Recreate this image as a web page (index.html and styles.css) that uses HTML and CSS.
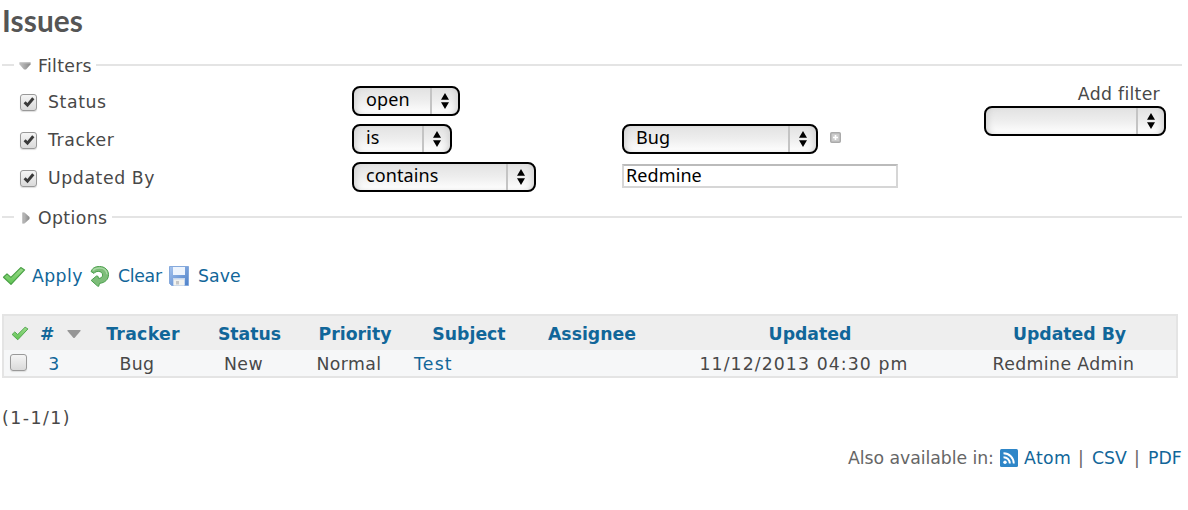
FILE: index.html
```html
<!DOCTYPE html>
<html lang="en">
<head>
<meta charset="utf-8">
<title>Issues</title>
<link rel="stylesheet" href="styles.css">
</head>
<body>
<svg width="0" height="0" class="defs">
  <defs>
    <linearGradient id="green" x1="0" y1="0" x2="0" y2="1"><stop offset="0" stop-color="#9bdb8b"/><stop offset="1" stop-color="#5fc452"/></linearGradient>
    <linearGradient id="grey" x1="0" y1="0" x2="1" y2="0"><stop offset="0" stop-color="#c4c4c4"/><stop offset="1" stop-color="#888"/></linearGradient>
    <linearGradient id="blue" x1="0" y1="0" x2="1" y2="1"><stop offset="0" stop-color="#a5c3ee"/><stop offset="1" stop-color="#4b7fc8"/></linearGradient>
    <symbol id="tick" viewBox="0 0 24 20"><path d="M1.500 11.300 5 7.900l3.900 3.500L18.800 1.600l3.800 2.300L9 18.400z" fill="url(#green)" stroke="#4aa046" stroke-width="1.200" stroke-linejoin="round"/></symbol>
    <symbol id="arrows" viewBox="0 0 8 16"><path d="M4 0 8 6.7H0zM0 9.3h8L4 16z" fill="#000"/></symbol>
    <symbol id="check" viewBox="0 0 12 12"><path d="M1.6 6.2 4.5 9.2 10.3 2.2" fill="none" stroke="#3a3a3a" stroke-width="2.9"/></symbol>
  </defs>
</svg>
<main class="content">
  <h2 class="title">Issues</h2>

  <section class="filters">
    <div class="legend">
      <span class="stub"></span>
      <svg class="toggle" width="12" height="12" viewBox="0 0 12 12"><path d="M.5 2.5h11v2L7 9.500H5L.5 4.5z" fill="url(#grey)"/><path d="M.5 2.5h11v1H.5z" fill="#bbb"/></svg>
      <span class="legend-text filters-text">Filters</span>
      <span class="rule"></span>
    </div>
    <div class="filter-body">
      <div class="rows">
        <div class="row">
          <span class="box"><svg width="12" height="12"><use href="#check"/></svg></span>
          <span class="label status">Status</span>
          <span class="select w-open"><span class="value">open</span><span class="knob"><svg width="8" height="16"><use href="#arrows"/></svg></span></span>
        </div>
        <div class="row">
          <span class="box"><svg width="12" height="12"><use href="#check"/></svg></span>
          <span class="label tracker">Tracker</span>
          <span class="select w-is"><span class="value">is</span><span class="knob"><svg width="8" height="16"><use href="#arrows"/></svg></span></span>
          <span class="values">
            <span class="select w-bug"><span class="value">Bug</span><span class="knob"><svg width="8" height="16"><use href="#arrows"/></svg></span></span>
            <svg class="plus" width="11" height="11" viewBox="0 0 11 11"><rect x=".75" y=".75" width="9.5" height="9.5" rx="1" fill="#ccc" stroke="#aaa" stroke-width="1.5"/><path d="M5.5 3v5M3 5.5h5" stroke="#fff" stroke-width="1.6"/></svg>
          </span>
        </div>
        <div class="row">
          <span class="box"><svg width="12" height="12"><use href="#check"/></svg></span>
          <span class="label updated">Updated By</span>
          <span class="select w-contains"><span class="value">contains</span><span class="knob"><svg width="8" height="16"><use href="#arrows"/></svg></span></span>
          <span class="input">Redmine</span>
        </div>
      </div>
      <div class="add-filter">
        <span class="add-label">Add filter</span>
        <span class="select w-add"><span class="value"></span><span class="knob"><svg width="8" height="16"><use href="#arrows"/></svg></span></span>
      </div>
    </div>
  </section>

  <div class="legend options">
    <span class="stub"></span>
    <svg class="toggle" width="12" height="12" viewBox="0 0 12 12"><path d="M3.500 .5h2L10.5 5v2L5.500 11.5h-2z" fill="url(#grey)"/><path d="M3.500 .5h1v11h-1z" fill="#aaa"/></svg>
    <span class="legend-text options-text">Options</span>
    <span class="rule"></span>
  </div>

  <p class="buttons">
    <a class="action apply"><svg width="24" height="20"><use href="#tick"/></svg>Apply</a>
    <a class="action clear"><svg width="20" height="22" viewBox="0 0 20 22"><path d="M1 6.500C2.500 2.800 5.500 1.500 9.500 1.500c5.200 0 9 3.400 9 8.200 0 4.600-3.300 8-9 8.700L8.700 21.300 7.500 21 1.200 15.400 6.500 11l1.500.3.600 2.200c2.300-.2 4-1.500 4-3.400 0-2.300-1.800-3.700-4.300-3.700-2 0-3.200.700-4.300 2z" fill="#7dbd79" stroke="#4a9f4c" stroke-width="1" stroke-linejoin="round"/><path d="M3 5.500C4.500 3.700 6.500 2.900 9.500 2.900c4.200 0 7.300 2.500 7.500 6.300" fill="none" stroke="#a9d8a4" stroke-width="1.500"/></svg>Clear</a>
    <a class="action save"><svg width="20" height="20" viewBox="0 0 20 20"><path d="M.5.5h19v19H2.500l-2-2z" fill="url(#blue)" stroke="#85a9dc"/><path d="M4 1h12v8H4z" fill="#edf4fd"/><path d="M4 12h12v7.500H4z" fill="#c8d8ee"/><path d="M5 13.500h10v6H5z" fill="#f3f3ef"/><path d="M7 15h3v3.500H7z" fill="#c6c6c6"/></svg>Save</a>
  </p>

  <table class="list">
    <colgroup><col class="c-check"><col class="c-id"><col class="c-tracker"><col class="c-status"><col class="c-priority"><col class="c-subject"><col class="c-assignee"><col class="c-updated"><col class="c-by"></colgroup>
    <thead>
      <tr>
        <th><svg class="th-tick" width="18" height="15"><use href="#tick"/></svg></th>
        <th><span class="sort">#<svg width="14" height="8" viewBox="0 0 14 8"><path d="M.5 0h13v1L7.500 8h-1L.5 1z" fill="#969696"/></svg></span></th>
        <th class="th-tracker">Tracker</th><th>Status</th><th>Priority</th><th>Subject</th><th>Assignee</th><th>Updated</th><th>Updated By</th>
      </tr>
    </thead>
    <tbody>
      <tr>
        <td class="td-check"><span class="box"></span></td>
        <td class="td-id"><a>3</a></td><td>Bug</td><td>New</td><td>Normal</td><td class="td-subject"><a>Test</a></td><td></td><td class="td-date">11/12/2013 04:30 pm</td><td>Redmine Admin</td>
      </tr>
    </tbody>
  </table>

  <p class="pagination">(1-1/1)</p>

  <p class="formats">
    <span class="also">Also available in:</span>
    <svg class="feed" width="18" height="18" viewBox="0 0 18 18"><rect width="18" height="18" rx="1.500" fill="#2e86c8"/><circle cx="5" cy="13.200" r="1.700" fill="#fff"/><path d="M3.500 8.200a6.300 6.300 0 0 1 6.300 6.300M3.500 4.200a10.300 10.300 0 0 1 10.300 10.300" fill="none" stroke="#fff" stroke-width="1.900"/></svg>
    <a class="atom">Atom</a><span class="sep">|</span><a class="csv">CSV</a><span class="sep">|</span><a class="pdf">PDF</a>
  </p>
</main>
</body>
</html>
```

FILE: styles.css
```css
* { box-sizing: border-box; }
body {
  margin: 0;
  background: #fff;
  color: #484848;
  font: 17.3px/24px "DejaVu Sans", Verdana, sans-serif;
  letter-spacing: .4px;
}
svg { display: block; flex: none; }
.defs { position: absolute; }
a { color: #169; }
p { margin: 0; }
.content { width: 1182px; padding-left: 2px; }
.title {
  height: 53px;
  margin: 0;
  padding-top: 1px;
  color: #555;
  font: bold 29.8px/40px Lato, "Trebuchet MS", sans-serif;
  letter-spacing: .1px;
}

.legend { display: flex; align-items: center; height: 24px; }
.stub { width: 12px; height: 2px; background: #e4e4e4; }
.rule { flex: 1; height: 2px; background: #e4e4e4; }
.toggle { margin: 2px 6px 0 5px; }
.legend-text { margin-left: 1px; padding-top: 2px; white-space: nowrap; }
.filters-text { width: 58px; letter-spacing: .3px; }
.options-text { width: 74px; }
.options { margin-top: 13px; }

.filter-body { display: flex; justify-content: space-between; height: 115px; padding: 9px 16px 0 18px; }
.rows { display: flex; flex-direction: column; gap: 8px; }
.row { display: flex; align-items: center; height: 30px; }
.box {
  display: flex;
  align-items: center;
  justify-content: center;
  width: 17px;
  height: 17px;
  border: 1.5px solid #999;
  border-radius: 3px;
  background: linear-gradient(#f5f5f5, #dadada);
  box-shadow: 0 1px 1px #ddd;
}
.label { width: 304px; margin-left: 11px; padding-top: 2px; letter-spacing: .6px; }
.row .box { margin-top: 2px; }

.select {
  display: flex;
  height: 30px;
  border: 2px solid #000;
  border-radius: 8px;
  background: linear-gradient(#e2e2e2, #eee 50%, #fff);
  box-shadow: inset 5px 0 6px -3px #d2d2d2, inset -5px 0 6px -3px #d2d2d2;
  color: #000;
  font: 18px/22px "Noto Sans", "Lucida Grande", sans-serif;
  letter-spacing: .1px;
}
.value { flex: 1; padding-left: 12px; }
.knob {
  display: flex;
  align-items: center;
  width: 28px;
  padding-left: 9px;
  border-left: 2px solid #c4c4c4;
}
.w-open { width: 108px; }
.w-is { width: 100px; }
.w-contains { width: 184px; }
.w-bug { width: 196px; }
.w-add { width: 182px; }
.values { display: flex; align-items: center; margin-left: 170px; }
.plus { margin: -4px 0 0 12px; }
.input {
  width: 276px;
  height: 24px;
  margin: -2px 0 0 86px;
  padding-left: 2px;
  border: 2px solid #d6d6d6;
  border-top-color: #bbb;
  color: #000;
  font: 18px/18px "Noto Sans", "Lucida Grande", sans-serif;
  letter-spacing: .1px;
}
.add-filter { display: flex; flex-direction: column; align-items: flex-end; margin-top: -5px; }
.add-label { height: 25px; padding: 1px 6px 0 0; letter-spacing: .3px; }

.buttons { display: flex; height: 24px; margin-top: 35px; }
.action { display: flex; align-items: center; }
.apply { width: 88px; gap: 6px; }
.clear { width: 79px; gap: 8px; letter-spacing: -.3px; }
.save { gap: 9px; letter-spacing: .1px; }

.list {
  width: 1176px;
  margin-top: 26px;
  border: 2px solid #e4e4e4;
  border-spacing: 0;
  table-layout: fixed;
}
.list th, .list td { padding: 2px 0 0; text-align: center; white-space: nowrap; }
.list th { height: 34px; background: #eee; color: #169; letter-spacing: 0; }
.list .th-tracker { letter-spacing: .3px; }
.list td { height: 26px; padding-right: 12px; background: #f6f7f8; }
.list .td-check { padding: 0 0 2px 6px; }
.list .td-id { padding-right: 14px; }
.list .td-subject { padding-left: 3px; text-align: left; letter-spacing: 1.2px; }
.list .td-date { letter-spacing: 1.1px; }
.c-check { width: 32px; }
.c-id { width: 50px; }
.c-tracker { width: 114px; }
.c-status { width: 99px; }
.c-priority { width: 112px; }
.c-subject { width: 116px; }
.c-assignee { width: 130px; }
.c-updated { width: 306px; }
.c-by { width: 213px; }
.th-tick { margin: -2px 0 0 7px; }
.sort { display: flex; align-items: center; gap: 13px; padding-left: 4px; }

.pagination { margin-top: 28px; letter-spacing: 1.5px; }
.formats { display: flex; align-items: center; justify-content: flex-end; height: 24px; margin-top: 16px; }
.also { width: 146px; color: #666; letter-spacing: -.05px; white-space: nowrap; }
.feed { margin: 0 6px; }
.sep { width: 22px; text-align: center; color: #666; }
.atom { width: 46px; }
.csv { width: 34px; letter-spacing: 0; }
.pdf { width: 34px; letter-spacing: 0; }
```
